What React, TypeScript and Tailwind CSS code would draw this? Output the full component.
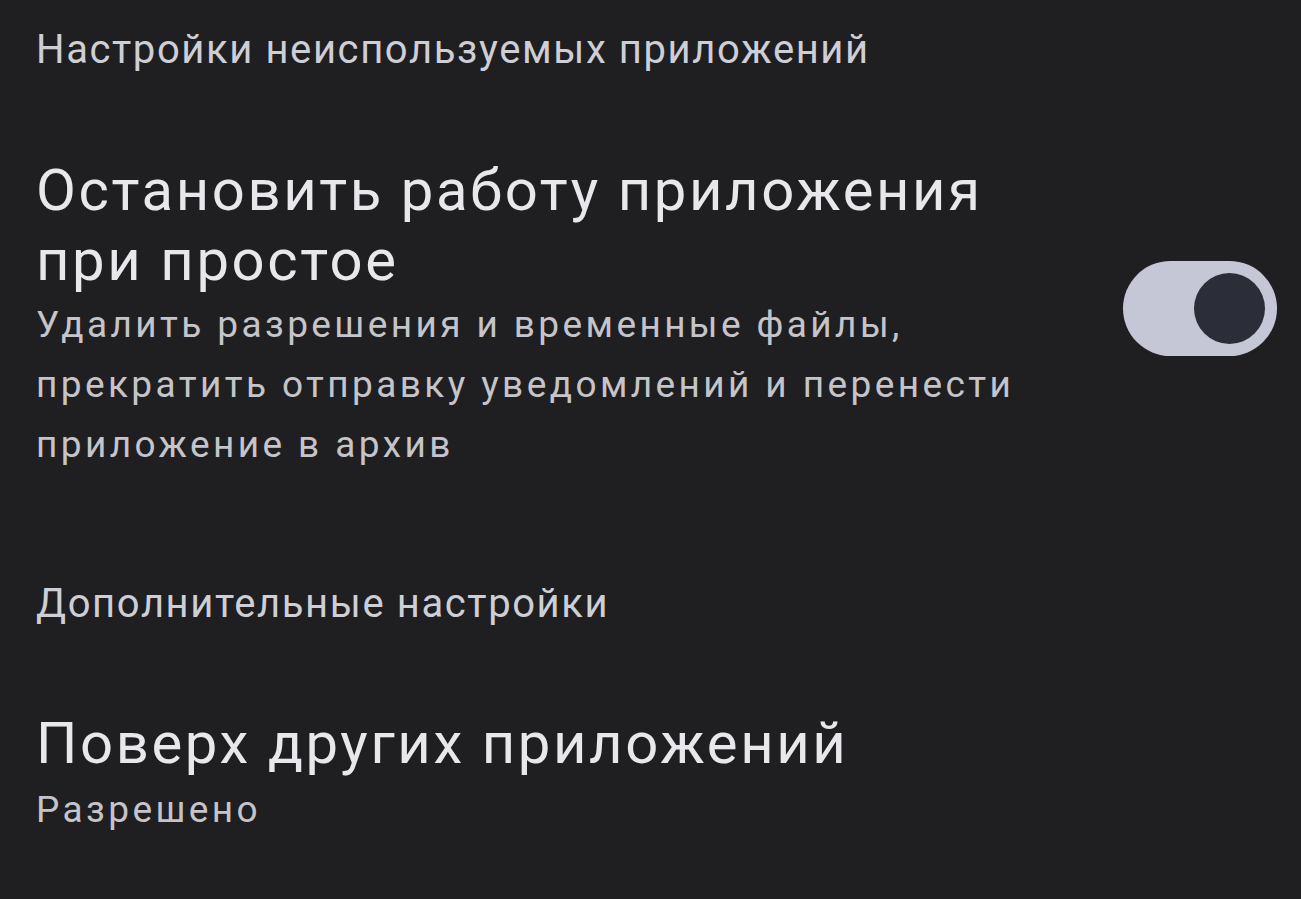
export default function App() {
    return (
        <div
            className="min-h-screen w-full bg-[#1f1f21] pl-[36px] pr-[24px] pt-[26px] text-[#e6e6ea]"
            style={{ fontFamily: 'Roboto, "Noto Sans", sans-serif' }}
        >
            <div className="text-[40px] leading-[48px] tracking-[1.6px] text-[#cdced6]">
                Настройки неиспользуемых приложений
            </div>

            <div className="mt-[81px] flex items-center justify-between">
                <div>
                    <div className="text-[58px] leading-[70px] tracking-[2.6px] text-[#e8e8ec]">
                        Остановить работу приложения
                        <br />
                        при простое
                    </div>
                    <div className="text-[37px] leading-[60px] tracking-[3.4px] text-[#c4c4ca]">
                        Удалить разрешения и временные файлы,
                        <br />
                        прекратить отправку уведомлений и перенести
                        <br />
                        приложение в архив
                    </div>
                </div>
                <div className="mb-[14px] flex h-[95px] w-[154px] shrink-0 items-center justify-end rounded-full bg-[#c6c7d6] pr-[12px]">
                    <div className="h-[71px] w-[71px] rounded-full bg-[#2b2e38]" />
                </div>
            </div>

            <div className="mt-[105px] text-[40px] leading-[48px] tracking-[1.6px] text-[#cdced6]">
                Дополнительные настройки
            </div>

            <div className="mt-[80px]">
                <div className="text-[58px] leading-[70px] tracking-[2.6px] text-[#e8e8ec]">Поверх других приложений</div>
                <div className="mt-[8px] text-[37px] leading-[48px] tracking-[3.4px] text-[#c4c4ca]">Разрешено</div>
            </div>
        </div>
    );
}
